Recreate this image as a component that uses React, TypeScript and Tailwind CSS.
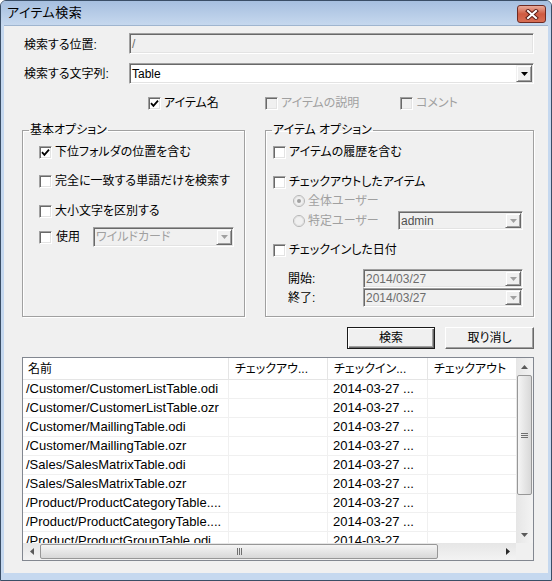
import React from "react";

const rows = [
  "/Customer/CustomerListTable.odi",
  "/Customer/CustomerListTable.ozr",
  "/Customer/MaillingTable.odi",
  "/Customer/MaillingTable.ozr",
  "/Sales/SalesMatrixTable.odi",
  "/Sales/SalesMatrixTable.ozr",
  "/Product/ProductCategoryTable....",
  "/Product/ProductCategoryTable....",
  "/Product/ProductGroupTable.odi",
];

function Arrow({ dir, color = "#000" }: { dir: "up" | "down" | "left" | "right"; color?: string }) {
  const pts = {
    down: "0,0 7,0 3.5,4",
    up: "0,4 7,4 3.5,0",
    left: "4,0 4,7 0,3.5",
    right: "0,0 0,7 4,3.5",
  }[dir];
  const vertical = dir === "up" || dir === "down";
  return (
    <svg width={vertical ? 7 : 4} height={vertical ? 4 : 7} viewBox={vertical ? "0 0 7 4" : "0 0 4 7"}>
      <polygon points={pts} fill={color} />
    </svg>
  );
}

function Check({ checked = false, disabled = false }: { checked?: boolean; disabled?: boolean }) {
  return (
    <span
      className={`inline-flex w-[13px] h-[13px] shrink-0 items-center justify-center border border-t-[#a0a0a0] border-l-[#a0a0a0] border-b-white border-r-white shadow-[inset_1px_1px_0_#696969,inset_-1px_-1px_0_#e3e3e3] ${
        disabled ? "bg-[#f0f0f0]" : "bg-white"
      }`}
    >
      {checked && (
        <svg width="9" height="9" viewBox="0 0 9 9">
          <path d="M1 4.2 L3.4 6.8 L8 1.6" stroke="#000" strokeWidth="1.8" fill="none" />
        </svg>
      )}
    </span>
  );
}

function Radio({ checked = false }: { checked?: boolean }) {
  return (
    <svg width="12" height="12" viewBox="0 0 12 12" className="shrink-0">
      <circle cx="6" cy="6" r="5.5" fill="#f0f0f0" stroke="#b4b4b4" />
      <circle cx="6" cy="6" r="4.5" fill="none" stroke="#e0e0e0" />
      {checked && <circle cx="6" cy="6" r="2" fill="#a0a0a0" />}
    </svg>
  );
}

function DropBtn({ disabled = false }: { disabled?: boolean }) {
  return (
    <div className="w-[16px] self-stretch flex items-center justify-center bg-[#f0f0f0] border border-t-[#f0f0f0] border-l-[#f0f0f0] border-b-[#696969] border-r-[#696969] shadow-[inset_1px_1px_0_#fff,inset_-1px_-1px_0_#a0a0a0]">
      <Arrow dir="down" color={disabled ? "#a0a0a0" : "#000"} />
    </div>
  );
}

function Field({
  className = "",
  disabled = false,
  text,
  textColor = "text-black",
  combo = false,
}: {
  className?: string;
  disabled?: boolean;
  text: string;
  textColor?: string;
  combo?: boolean;
}) {
  return (
    <div
      className={`flex p-[1px] border border-t-[#a0a0a0] border-l-[#a0a0a0] border-b-white border-r-white shadow-[inset_1px_1px_0_#696969,inset_-1px_-1px_0_#e3e3e3] ${
        disabled ? "bg-[#f0f0f0]" : "bg-white"
      } ${className}`}
    >
      <div className={`flex-1 flex items-center pl-[1px] whitespace-nowrap ${textColor}`}>{text}</div>
      {combo && <DropBtn disabled={disabled} />}
    </div>
  );
}

function CheckItem({ label, checked = false, disabled = false, className = "" }: { label: string; checked?: boolean; disabled?: boolean; className?: string }) {
  return (
    <div className={`flex items-center gap-[3px] h-[16px] ${className}`}>
      <Check checked={checked} disabled={disabled} />
      <span className={disabled ? "text-[#a0a0a0]" : "text-black"}>{label}</span>
    </div>
  );
}

function Group({ title, className = "", children }: { title: string; className?: string; children: React.ReactNode }) {
  return (
    <fieldset className={`h-[194px] border border-[#a0a0a0] shadow-[inset_1px_1px_0_#fff,1px_1px_0_#fff] ${className}`}>
      <legend className="ml-[6px] px-[1px] leading-[14px]">{title}</legend>
      {children}
    </fieldset>
  );
}

function VScroll() {
  return (
    <div className="w-[17px] flex flex-col bg-gradient-to-r from-[#e6e6e6] to-[#f3f3f3]">
      <div className="h-[17px] flex items-center justify-center">
        <Arrow dir="up" color="#5a5a5a" />
      </div>
      <div className="mx-[1px] h-[120px] rounded-[2px] border border-[#979797] bg-gradient-to-r from-[#f5f5f5] to-[#d8d8d8] flex items-center justify-center">
        <div className="flex flex-col gap-[1px]">
          <div className="w-[7px] h-[1px] bg-[#6f6f6f]" />
          <div className="w-[7px] h-[1px] bg-[#6f6f6f]" />
          <div className="w-[7px] h-[1px] bg-[#6f6f6f]" />
        </div>
      </div>
      <div className="flex-1" />
      <div className="h-[17px] flex items-center justify-center">
        <Arrow dir="down" color="#5a5a5a" />
      </div>
    </div>
  );
}

function HScroll() {
  return (
    <div className="flex-1 flex bg-gradient-to-b from-[#e6e6e6] to-[#f3f3f3]">
      <div className="w-[17px] flex items-center justify-center">
        <Arrow dir="left" color="#5a5a5a" />
      </div>
      <div className="my-[1px] w-[398px] rounded-[2px] border border-[#979797] bg-gradient-to-b from-[#f5f5f5] to-[#d8d8d8] flex items-center justify-center">
        <div className="flex gap-[1px]">
          <div className="w-[1px] h-[7px] bg-[#6f6f6f]" />
          <div className="w-[1px] h-[7px] bg-[#6f6f6f]" />
          <div className="w-[1px] h-[7px] bg-[#6f6f6f]" />
        </div>
      </div>
      <div className="flex-1" />
      <div className="w-[17px] flex items-center justify-center">
        <Arrow dir="right" color="#2a2a2a" />
      </div>
    </div>
  );
}

export default function App() {
  return (
    <div
      className="w-[552px] h-[581px] flex flex-col rounded-t-[6px] border border-[#3a4e66] bg-[#c5d8ef] text-[12px] leading-[14px] text-black [font-feature-settings:'palt']"
      style={{ fontFamily: '"Liberation Sans", "Noto Sans CJK JP", sans-serif' }}
    >
      {/* title bar */}
      <div className="h-[24px] shrink-0 flex items-center pl-[6px] pr-[5px] rounded-t-[5px] bg-gradient-to-b from-[#a6bfdf] to-[#c6d8ee]">
        <span className="text-[13px] tracking-[0.5px]">アイテム検索</span>
        <div className="ml-auto mt-[2px] w-[29px] h-[18px] rounded-[3px] border border-[#6e2a22] bg-gradient-to-b from-[#e8ab9b] via-[#cf5a40] to-[#d86f55] flex items-center justify-center">
          <svg width="14" height="11" viewBox="0 0 14 11">
            <path d="M3 2 L11 9 M11 2 L3 9" stroke="#5b1d16" strokeWidth="4" strokeLinecap="square" />
            <path d="M3 2 L11 9 M11 2 L3 9" stroke="#fff" strokeWidth="2" strokeLinecap="square" />
          </svg>
        </div>
      </div>

      {/* body */}
      <div className="flex-1 mx-[3px] mb-[7px] bg-[#f0f0f0] border-t border-[#9fb5cf] pl-[18px] pr-[14px] pt-[7px] flex flex-col">
        <div className="flex items-center h-[21px]">
          <div className="w-[107px] pl-[2px] pt-[3px]">検索する位置:</div>
          <Field className="flex-1 h-[21px]" disabled text="/" textColor="text-[#6d6d6d]" />
        </div>
        <div className="flex items-center h-[21px] mt-[9px]">
          <div className="w-[107px] pl-[2px] pt-[1px]">検索する文字列:</div>
          <Field className="flex-1 h-[21px]" text="Table" combo />
        </div>
        <div className="flex items-center h-[16px] mt-[11px] pl-[126px]">
          <CheckItem className="w-[117px]" label="アイテム名" checked />
          <CheckItem className="w-[135px]" label="アイテムの説明" disabled />
          <CheckItem label="コメント" disabled />
        </div>

        <div className="flex mt-[12px] gap-[20px]">
          <Group title="基本オプション" className="w-[223px]">
            <div className="flex flex-col pl-[16px]">
              <CheckItem className="mt-[7px]" label="下位フォルダの位置を含む" checked />
              <CheckItem className="mt-[13px]" label="完全に一致する単語だけを検索す" />
              <CheckItem className="mt-[14px]" label="大小文字を区別する" />
              <div className="mt-[8px] h-[20px] flex items-center">
                <Check />
                <span className="w-[41px] pl-[4px]">使用</span>
                <Field className="w-[141px] h-[20px]" disabled text="ワイルドカード" textColor="text-[#a0a0a0]" combo />
              </div>
            </div>
          </Group>
          <Group title="アイテム オプション" className="flex-1">
            <div className="flex flex-col pl-[7px]">
              <CheckItem className="mt-[7px]" label="アイテムの履歴を含む" />
              <CheckItem className="mt-[14px]" label="チェックアウトしたアイテム" />
              <div className="mt-[3px] h-[16px] pl-[20px] flex items-center gap-[3px] text-[#a0a0a0]">
                <Radio checked />
                <span>全体ユーザー</span>
              </div>
              <div className="mt-[2px] h-[19px] pl-[20px] flex items-center text-[#a0a0a0]">
                <Radio />
                <span className="w-[93px] pl-[3px]">特定ユーザー</span>
                <Field className="w-[125px] h-[19px]" disabled text="admin" textColor="text-[#505050]" combo />
              </div>
              <CheckItem className="mt-[12px]" label="チェックインした日付" />
              <div className="mt-[11px] h-[19px] pl-[15px] flex items-center">
                <span className="w-[75px]">開始:</span>
                <Field className="w-[160px] h-[19px]" disabled text="2014/03/27" textColor="text-[#6d6d6d]" combo />
              </div>
              <div className="h-[19px] pl-[15px] flex items-center">
                <span className="w-[75px]">終了:</span>
                <Field className="w-[160px] h-[19px]" disabled text="2014/03/27" textColor="text-[#6d6d6d]" combo />
              </div>
            </div>
          </Group>
        </div>

        <div className="flex justify-end gap-[10px] mt-[10px]">
          <button className="w-[88px] h-[22px] border border-[#1a1a1a] bg-[#f0f0f0] shadow-[inset_1px_1px_0_#fff,inset_-1px_-1px_0_#696969,inset_-2px_-2px_0_#a0a0a0]">
            検索
          </button>
          <button className="w-[89px] h-[22px] border border-t-white border-l-white border-b-[#696969] border-r-[#696969] bg-[#f0f0f0] shadow-[inset_-1px_-1px_0_#a0a0a0]">
            取り消し
          </button>
        </div>

        <div className="mt-[8px] h-[204px] border border-[#828790] bg-white flex flex-col">
          <div className="flex flex-1 min-h-0">
            <div className="flex-1 overflow-hidden flex flex-col">
              <div className="h-[22px] shrink-0 flex border-b border-[#e5e5e5] whitespace-nowrap">
                <div className="w-[206px] shrink-0 pl-[5px] flex items-center border-r border-[#e5e5e5]">名前</div>
                <div className="w-[99px] shrink-0 pl-[6px] flex items-center border-r border-[#e5e5e5] overflow-hidden">チェックアウ...</div>
                <div className="w-[100px] shrink-0 pl-[6px] flex items-center border-r border-[#e5e5e5] overflow-hidden">チェックイン...</div>
                <div className="flex-1 pl-[6px] flex items-center overflow-hidden">チェックアウト</div>
              </div>
              {rows.map((r, i) => (
                <div key={i} className="h-[19px] shrink-0 flex border-b border-[#f0f0f0] whitespace-nowrap text-[13px]">
                  <div className="w-[206px] shrink-0 pl-[3px] flex items-center border-r border-[#f0f0f0] overflow-hidden">{r}</div>
                  <div className="w-[99px] shrink-0 border-r border-[#f0f0f0]" />
                  <div className="w-[100px] shrink-0 pl-[5px] flex items-center border-r border-[#f0f0f0]">2014-03-27 ...</div>
                  <div className="flex-1" />
                </div>
              ))}
            </div>
            <VScroll />
          </div>
          <div className="flex h-[17px] shrink-0">
            <HScroll />
            <div className="w-[17px] bg-[#f0f0f0]" />
          </div>
        </div>
      </div>
    </div>
  );
}
